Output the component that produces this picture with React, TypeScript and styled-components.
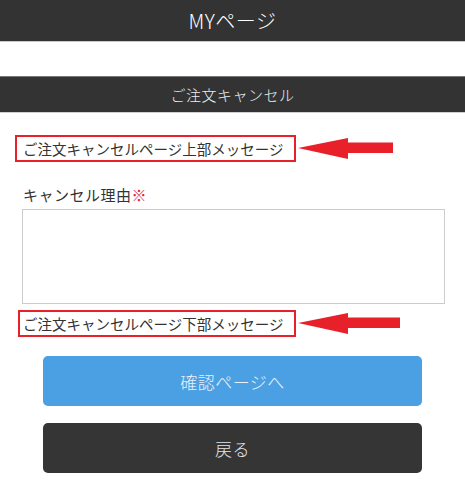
import React from 'react';
import styled, { createGlobalStyle } from 'styled-components';

const GlobalStyle = createGlobalStyle`
    body {
        margin: 0;
        background: #fff;
        font-family: "Noto Sans CJK JP", "Noto Sans", sans-serif;
        color: #333;
    }
`;

const Page = styled.div`
    width: 465px;
    height: 496px;
    overflow: hidden;
    background: #fff;
`;

const TopBar = styled.header`
    height: 41px;
    background: #333;
    border-bottom: 1px solid #c8c8c8;
    display: flex;
    align-items: center;
    justify-content: center;
    color: #fff;
    font-size: 20px;
    font-weight: 300;
    letter-spacing: 0.5px;
`;

const Spacer = styled.div`
    height: 34px;
`;

const SectionBar = styled.div`
    height: 35px;
    background: #333;
    border-top: 1px solid #777;
    border-bottom: 1px solid #d0d0d0;
    display: flex;
    align-items: center;
    justify-content: center;
    color: #eee;
    font-size: 15px;
    font-weight: 300;
    letter-spacing: 0.5px;
`;

const Content = styled.div`
    padding: 22px 20px 0 22px;
    display: flex;
    flex-direction: column;
`;

const MessageRow = styled.div<{ shift: number }>`
    display: flex;
    align-items: center;
    margin-left: ${p => p.shift}px;
`;

const MessageBox = styled.div<{ boxWidth: number; inset: number }>`
    width: ${p => p.boxWidth}px;
    height: 27px;
    box-sizing: border-box;
    border: 2px solid #e8202a;
    display: flex;
    align-items: center;
    padding-left: ${p => p.inset}px;
    font-size: 14.5px;
    color: #333;
    white-space: nowrap;
    overflow: hidden;
`;

const Arrow = ({ length }: { length: number }) => (
    <svg width={length} height={24} viewBox={`0 0 ${length} 24`} style={{ marginLeft: 2 }}>
        <polygon
            points={`0,11 50,1 50,5.5 ${length},5.5 ${length},16 50,16 50,22`}
            fill="#e8202a"
        />
    </svg>
);

const Label = styled.div`
    margin-top: 24px;
    margin-left: 1px;
    font-size: 15px;
    color: #333;
    letter-spacing: 0.5px;
    line-height: 18px;
`;

const Required = styled.span`
    color: #e8202a;
`;

const TextArea = styled.textarea`
    display: block;
    margin-top: 5px;
    width: 423px;
    height: 95px;
    box-sizing: border-box;
    border: 1px solid #ccc;
    border-radius: 0;
    resize: none;
    outline: none;
    font-family: inherit;
`;

const LowerRow = styled(MessageRow)`
    margin-top: 6px;
`;

const Buttons = styled.div`
    margin-top: 19px;
    display: flex;
    flex-direction: column;
    align-items: center;
    gap: 17px;
    padding-right: 2px;
`;

const Button = styled.button<{ variant: 'primary' | 'dark' }>`
    width: 379px;
    height: 50px;
    border: none;
    border-radius: 5px;
    background: ${p => (p.variant === 'primary' ? '#4aa0e2' : '#353535')};
    color: ${p => (p.variant === 'primary' ? '#e8f2fb' : '#e6e6e6')};
    font-family: inherit;
    font-size: 17px;
    font-weight: 300;
    letter-spacing: 0.5px;
    cursor: pointer;
`;

export default function App() {
    return (
        <Page>
            <GlobalStyle />
            <TopBar>MYページ</TopBar>
            <Spacer />
            <SectionBar>ご注文キャンセル</SectionBar>
            <Content>
                <MessageRow shift={-7}>
                    <MessageBox boxWidth={281} inset={6}>ご注文キャンセルページ上部メッセージ</MessageBox>
                    <Arrow length={95} />
                </MessageRow>
                <Label>
                    キャンセル理由<Required>※</Required>
                </Label>
                <TextArea />
                <LowerRow shift={-4}>
                    <MessageBox boxWidth={278} inset={3}>ご注文キャンセルページ下部メッセージ</MessageBox>
                    <Arrow length={102} />
                </LowerRow>
                <Buttons>
                    <Button variant="primary">確認ページへ</Button>
                    <Button variant="dark">戻る</Button>
                </Buttons>
            </Content>
        </Page>
    );
}
